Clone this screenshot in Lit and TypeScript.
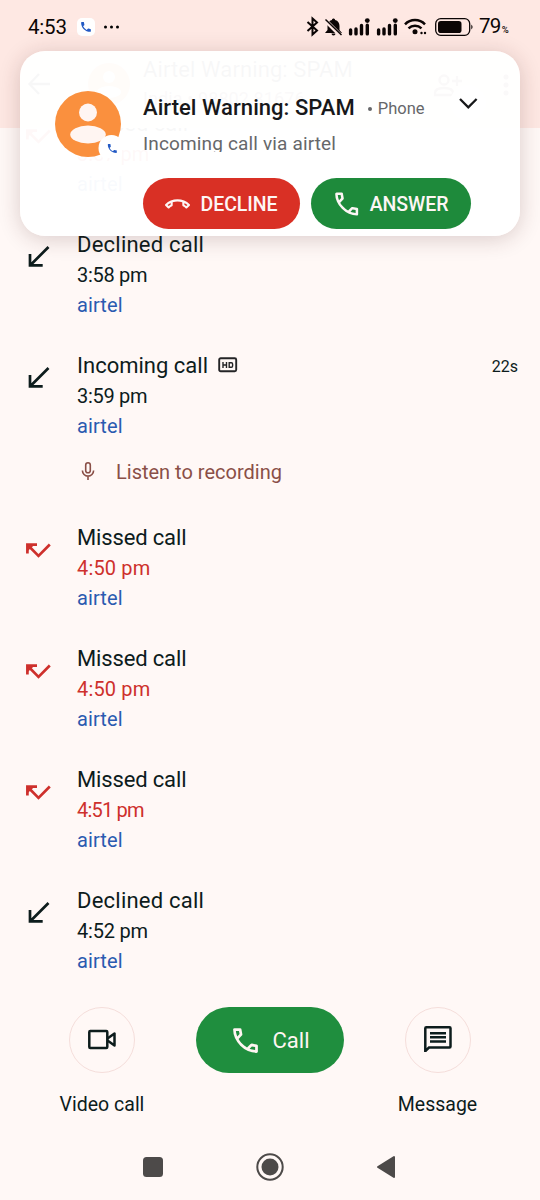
import { LitElement, html, css, svg } from "lit";
import { customElement, property } from "lit/decorators.js";

const CALL_OUTLINE =
  "M19.95 21q-3.125 0-6.175-1.363t-5.55-3.862q-2.5-2.5-3.862-5.55T3 4.05q0-.45.3-.75t.75-.3H8.1q.35 0 .625.238t.325.562l.65 3.5q.05.4-.025.675T9.4 8.45L6.975 10.9q.5.925 1.187 1.787t1.513 1.663q.775.775 1.625 1.438t1.8 1.212l2.35-2.35q.225-.225.588-.337t.712-.063l3.45.7q.35.1.575.363T21 15.9v4.05q0 .45-.3.75t-.75.3ZM6.025 9l1.65-1.65L7.25 5H5.025q.125 1.025.35 2.025T6.025 9Zm8.95 8.95q.975.425 1.988.675T19 18.95v-2.2l-2.35-.475-1.675 1.675Z";

const CALL_SOLID =
  "M6.62 10.79a15.15 15.15 0 0 0 6.59 6.59l2.2-2.2a1 1 0 0 1 1.02-.24c1.12.37 2.33.57 3.57.57.55 0 1 .45 1 1V20c0 .55-.45 1-1 1C10.61 21 3 13.39 3 4c0-.55.45-1 1-1h3.5c.55 0 1 .45 1 1 0 1.25.2 2.45.57 3.57.11.35.03.74-.25 1.02l-2.2 2.2z";

const CALL_END =
  "M18.6 10.520c1.050.51 2.040 1.150 2.960 1.910l-1.070 1.070c-.58-.47-1.210-.89-1.880-1.270v-1.710ZM5.400 10.520v1.700c-.65.37-1.280.79-1.870 1.270l-1.070-1.070c.91-.75 1.900-1.380 2.940-1.900ZM12 7C7.460 7 3.340 8.780.29 11.670c-.18.18-.29.43-.29.71s.11.53.29.7l2.480 2.480c.18.18.43.29.71.29.27 0 .52-.1.7-.28.79-.73 1.680-1.360 2.660-1.850.33-.16.56-.51.56-.9v-3.100C8.850 9.250 10.400 9 12 9s3.150.25 4.600.72v3.100c0 .4.23.74.56.9.98.49 1.870 1.110 2.660 1.850.18.17.43.28.7.28.28 0 .53-.11.71-.29l2.480-2.480c.18-.18.29-.43.29-.71s-.11-.53-.29-.71C20.660 8.780 16.540 7 12 7Z";

interface CallEntry {
  kind: "missed" | "incoming";
  title: string;
  time: string;
  titleTracking?: number;
  timeTracking?: number;
  hd?: boolean;
  duration?: string;
  recording?: boolean;
}

const CALLS: CallEntry[] = [
  { kind: "missed", title: "Missed call", time: "3:57 pm" },
  { kind: "incoming", title: "Declined call", time: "3:58 pm", titleTracking: 0.23, timeTracking: -0.3 },
  { kind: "incoming", title: "Incoming call", time: "3:59 pm", timeTracking: -0.3, hd: true, duration: "22s", recording: true },
  { kind: "missed", title: "Missed call", time: "4:50 pm", titleTracking: -0.15, timeTracking: 0.15 },
  { kind: "missed", title: "Missed call", time: "4:50 pm", titleTracking: -0.15, timeTracking: 0.15 },
  { kind: "missed", title: "Missed call", time: "4:51 pm", titleTracking: -0.15, timeTracking: -0.8 },
  { kind: "incoming", title: "Declined call", time: "4:52 pm", titleTracking: 0.23, timeTracking: -0.2 },
];

@customElement("status-bar")
class StatusBar extends LitElement {
  static styles = css`
    :host { display: block; height: 51px; }
    .bar { display: flex; align-items: center; height: 53px; padding: 0 30px 0 28px; box-sizing: border-box; color: #0b0505; font-family: Roboto, sans-serif; }
    .time { font-size: 20.5px; font-weight: 450; width: 49px; line-height: 24px; letter-spacing: -0.2px; }
    .app { width: 18px; height: 18px; border-radius: 5px; background: #fff; display: block; }
    .dots { margin-left: 8px; display: block; }
    .icons { margin-left: auto; display: block; }
    .pct { display: flex; align-items: baseline; font-size: 20.5px; font-weight: 450; line-height: 24px; margin-left: 5px; padding-top: 3px; letter-spacing: -0.7px; width: 31px; white-space: nowrap; }
    .pct small { font-size: 9.5px; letter-spacing: 0; font-weight: 500; margin-left: 1px; }
  `;
  render() {
    const bars = (x: number) => svg`<g transform="translate(${x} 0)">
      <path d="M1.600 14v3.900M7 13v4.900M12.500 9.500v8.400M18.300 9.200v8.700" stroke="#0b0505" stroke-width="3.400" stroke-linecap="round"/>
      <circle cx="18.300" cy="4.600" r="2.400"/></g>`;
    return html`<div class="bar">
      <span class="time">4:53</span>
      <svg class="app" viewBox="0 0 18 18"><g transform="translate(2.500 2.500) scale(.54)"><path d=${CALL_SOLID} fill="#2259c4" /></g></svg>
      <svg class="dots" width="18" height="6"><circle cx="2.500" cy="3" r="1.500" /><circle cx="8.500" cy="3" r="1.500" /><circle cx="14.500" cy="3" r="1.500" /></svg>
      <svg class="icons" width="168" height="22" viewBox="0 0 168 22" fill="#0b0505">
        <path d="M1.500 6 11 14.500 6.500 18.500V2.500L11 6.500 1.500 15" fill="none" stroke="#0b0505" stroke-width="2" />
        <path d="M27.500 2.500a1.500 1.500 0 0 1 1.600 1.500c3 .8 4.400 3 4.400 6v4l2.500 3H19l2.500-3v-4c0-3 1.500-5.200 4.400-6a1.500 1.500 0 0 1 1.600-1.500ZM25.500 17.500h4a2 2 0 0 1-4 0Z" />
        <path d="M19.500 4.500 34.500 19.500" stroke="#fde7e3" stroke-width="4" />
        <path d="M19.500 3.500 35.500 19" stroke="#0b0505" stroke-width="1.500" />
        ${bars(43)}${bars(71)}
        <g fill="none" stroke="#0b0505" stroke-width="2.500"><path d="M99 8.300a14 14 0 0 1 20 0" /><path d="M102.500 12.400a9.500 9.500 0 0 1 13 0" /></g>
        <circle cx="109" cy="15.800" r="2.500" /><circle cx="115.500" cy="17" r="1.200" /><circle cx="119" cy="17" r="1.200" />
        <rect x="129.700" y="2.700" width="34" height="16.600" rx="5" fill="none" stroke="#0b0505" stroke-width="1.300" />
        <rect x="132" y="5" width="23.500" height="12" rx="2.800" />
        <path d="M165.300 8.500q2.500 2.500 0 5z" />
      </svg>
      <span class="pct">79<small>%</small></span>
    </div>`;
  }
}

@customElement("call-entry")
class CallEntryRow extends LitElement {
  @property({ attribute: false }) entry!: CallEntry;
  static styles = css`
    :host { display: block; font-family: Roboto, sans-serif; color: #0d1c1c; }
    .row { display: grid; grid-template-columns: 77px 1fr auto; padding: 0 22px 30px 0; font-weight: 400; }
    .icon { display: block; margin: 13px 0 0 24px; }
    .title { display: flex; align-items: center; height: 30px; font-size: 22px; white-space: nowrap; }
    .hd { margin-left: 10px; display: block; }
    .time { height: 32px; line-height: 33px; font-size: 20px; }
    .missed { color: #ce302c; }
    .sim { height: 29px; line-height: 28px; font-size: 20px; color: #2a5ab0; letter-spacing: 0.1px; }
    .dur { line-height: 34px; font-size: 16px; }
    .rec { display: flex; align-items: center; gap: 17px; height: 30px; margin: 16px 0 5px; color: #8a4f47; font-size: 20px; white-space: nowrap; }
  `;
  render() {
    const e = this.entry;
    const missed = e.kind === "missed";
    return html`<div class="row">
      <svg class="icon" width="30" height="30" fill="none" stroke-width="2.700">
        ${missed
          ? svg`<path d="M3.400 18.500V9.700H13M4 10.300 14.500 20.900 25.800 9.500" stroke="#ce302c"/><path d="M3.500 9.700h7l-7 6.500z" fill="#ce302c"/>`
          : svg`<path d="M24.500 5 6 23.500M6 12V23.300H18.700" stroke="#0d1c1c"/>`}
      </svg>
      <div>
        <div class="title"><span style="letter-spacing:${e.titleTracking ?? 0}px">${e.title}</span>
          ${e.hd
            ? html`<svg class="hd" width="20" height="16" fill="none" stroke="#242426"><rect x="1.200" y="1.200" width="17" height="13" rx="1.500" stroke-width="1.900" /><path d="M5 5v6M8.500 5v6M5 8h3.500M11.200 5.700h2.200q1.200 0 1.200 1.200v2.200q0 1.200-1.200 1.200h-2.200z" stroke-width="1.400" /></svg>`
            : ""}
        </div>
        <div class="time ${missed ? "missed" : ""}" style="letter-spacing:${e.timeTracking ?? 0}px">${e.time}</div>
        <div class="sim">airtel</div>
        ${e.recording
          ? html`<div class="rec"><svg width="22" height="22" viewBox="0 0 22 22" fill="none" stroke="#8a4f47" stroke-width="1.600"><rect x="8.700" y="1.800" width="4.600" height="10" rx="2.300" /><path d="M5.400 9.500a5.600 5.600 0 0 0 11.200 0M11 15v4" /></svg>Listen to recording</div>`
          : ""}
      </div>
      <div class="dur">${e.duration ?? ""}</div>
    </div>`;
  }
}

@customElement("incoming-card")
class IncomingCard extends LitElement {
  static styles = css`
    :host { display: block; font-family: Roboto, sans-serif; }
    .card { display: grid; grid-template-columns: 123px 1fr; height: 185px; box-sizing: border-box; border-radius: 25px; background: rgba(255, 255, 255, 0.97); box-shadow: 0 3px 22px rgba(70, 30, 30, 0.2); }
    .avatar { display: block; margin: 39px 0 0 34px; }
    .head { display: flex; align-items: center; height: 34px; margin-top: 39px; }
    .name { font-size: 22px; font-weight: 500; color: #17181a; white-space: nowrap; letter-spacing: 0.05px; }
    .via { display: flex; align-items: center; gap: 6px; margin: 3px 0 0 13px; font-size: 16.5px; color: #66676a; white-space: nowrap; }
    .bullet { width: 4px; height: 4px; border-radius: 50%; background: #66676a; }
    .chev { display: block; margin: -8px 34px 0 auto; border-radius: 50%; background: #fff; }
    .sub { height: 28px; line-height: 39px; overflow: hidden; font-size: 19px; color: #66676a; letter-spacing: 0.15px; }
    .btns { display: flex; gap: 11px; margin-top: 26px; }
    .btn { display: flex; align-items: center; justify-content: center; height: 51px; padding-top: 2px; box-sizing: border-box; border-radius: 26px; color: #fdf6f5; font-size: 19.5px; font-weight: 500; letter-spacing: -0.05px; white-space: nowrap; }
    .no { width: 157px; gap: 10px; background: #d93025; }
    .yes { width: 160px; gap: 8px; padding-right: 2px; background: #1e8a3b; }
  `;
  render() {
    return html`<div class="card">
      <svg class="avatar" width="68" height="68" viewBox="0 0 68 68">
        <circle cx="34" cy="34" r="33" fill="#fa903e" />
        <circle cx="34" cy="22.500" r="9" fill="#fff5f2" />
        <ellipse cx="34" cy="44.500" rx="17.800" ry="9" fill="#fff5f2" />
        <circle cx="57.500" cy="58" r="13" fill="#fff" />
        <g transform="translate(52.300 52.500) scale(.5)"><path d=${CALL_SOLID} fill="#2259c4" /></g>
      </svg>
      <div>
        <div class="head"><span class="name">Airtel Warning: SPAM</span><span class="via"><span class="bullet"></span>Phone</span>
          <svg class="chev" width="36" height="36"><path d="M10 14 18.300 22.300 26.600 14" fill="none" stroke="#17181a" stroke-width="2.300" /></svg></div>
        <div class="sub">Incoming call via airtel</div>
        <div class="btns">
          <div class="btn no"><svg width="25" height="25" viewBox="0 0 24 24"><path d=${CALL_END} fill="#fdf6f5" fill-rule="evenodd" /></svg>DECLINE</div>
          <div class="btn yes"><svg width="30" height="30" viewBox="0.5 1 23.500 23.500"><path d=${CALL_OUTLINE} fill="#fdf6f5" /></svg>ANSWER</div>
        </div>
      </div>
    </div>`;
  }
}

@customElement("app-root")
class AppRoot extends LitElement {
  static styles = css`
    :host { display: block; width: 540px; height: 1200px; overflow: hidden; position: relative; background: #fff8f6; font-family: Roboto, sans-serif; color: #0d1c1c; }
    .page { display: flex; flex-direction: column; height: 1200px; }
    .header { height: 128px; flex: none; background: #fee8e3; box-sizing: border-box; }
    .toolbar { display: flex; align-items: flex-start; padding: 3px 31px 0 27px; }
    .back { margin: 18px 36px 0 0; }
    .face { margin: 8px 11px 0 0; }
    .contact { font-size: 22px; line-height: 32px; white-space: nowrap; letter-spacing: 0.1px; }
    .contact small { display: block; font-size: 18px; line-height: 26px; color: #57423e; }
    .add { margin: 19px 0 0 auto; }
    .more { margin: 20px 0 0 40px; }
    .list { height: 864px; display: flex; flex-direction: column; justify-content: flex-end; overflow: hidden; flex: none; }
    .list call-entry { flex: none; }
    .list call-entry:last-child { margin-bottom: -14px; }
    .actions { display: grid; grid-template-columns: 204px 132px 203px; justify-content: center; margin: 15px 1px 0 0; text-align: center; font-size: 19.5px; }
    .action { display: flex; flex-direction: column; align-items: center; gap: 17px; line-height: 30px; }
    .ring { width: 66px; height: 66px; border: 1.500px solid #f5dedb; border-radius: 50%; box-sizing: border-box; display: grid; place-items: center; }
    .call { display: flex; align-items: center; justify-content: center; gap: 11px; width: 148px; height: 66px; margin-left: -8px; padding-right: 2px; box-sizing: border-box; border-radius: 33px; background: #1f8e3e; color: #fff5f2; font-size: 22px; }
    .nav { display: flex; justify-content: center; align-items: center; gap: 92.5px; margin: 29px 1px 0 0; height: 36px; }
    .overlay { position: absolute; left: 20px; top: 51px; width: 500px; }
  `;
  render() {
    return html`<div class="page">
        <div class="header">
          <status-bar></status-bar>
          <div class="toolbar">
            <svg class="back" width="24" height="24" fill="none" stroke="#0d1c1c" stroke-width="2.300"><path d="M23 12H3M12 2 2.500 12 12 22" /></svg>
            <svg class="face" width="45" height="45"><circle cx="22" cy="22" r="21" fill="#fa903e" /><circle cx="22" cy="15" r="6" fill="#fff" /><ellipse cx="22" cy="30" rx="12" ry="6" fill="#fff" /></svg>
            <div class="contact">Airtel Warning: SPAM<small>India • 98802 81676</small></div>
            <svg class="add" width="30" height="26" fill="none" stroke="#57423e" stroke-width="2.300"><circle cx="11" cy="7" r="4.500" /><path d="M2 22v-2q0-5 9-5t9 5v2zM24 3v10M19 8h10" /></svg>
            <svg class="more" width="6" height="24" fill="#57423e"><circle cx="3" cy="3" r="2.500" /><circle cx="3" cy="11" r="2.500" /><circle cx="3" cy="19" r="2.500" /></svg>
          </div>
        </div>
        <div class="list">${CALLS.map((c) => html`<call-entry .entry=${c}></call-entry>`)}</div>
        <div class="actions">
          <div class="action"><div class="ring"><svg width="30" height="24" fill="none" stroke="#0d1c1c" stroke-width="2.500" stroke-linejoin="round"><rect x="2.300" y="3" width="18" height="17" rx="1" /><path d="M20.500 10.500 27.500 5.500V17.500L20.500 12.500" /></svg></div>Video call</div>
          <div class="call"><svg width="33" height="33" viewBox="0 0 24 24"><path d=${CALL_OUTLINE} fill="#fff5f2" /></svg>Call</div>
          <div class="action"><div class="ring"><svg width="30" height="30" fill="none" stroke="#0d1c1c" stroke-width="2.500"><path d="M2.300 27V3.300q0-1 1-1H26.500q1 0 1 1V21.500q0 1-1 1H6L2.300 26" /><path d="M7 8.200h16M7 12.300h16M7 16.400h16" /></svg></div>Message</div>
        </div>
        <div class="nav">
          <svg width="20" height="20"><rect width="20" height="20" rx="3.500" fill="#4d4a49" /></svg>
          <svg width="28" height="28" fill="none"><circle cx="14" cy="14" r="12.700" stroke="#4d4a49" stroke-width="2" /><circle cx="14" cy="14" r="8.500" fill="#4d4a49" /></svg>
          <svg width="20" height="24"><path d="M18 2V22L2 12Z" fill="#4d4a49" stroke="#4d4a49" stroke-width="2" stroke-linejoin="round" /></svg>
        </div>
      </div>
      <incoming-card class="overlay"></incoming-card>`;
  }
}
